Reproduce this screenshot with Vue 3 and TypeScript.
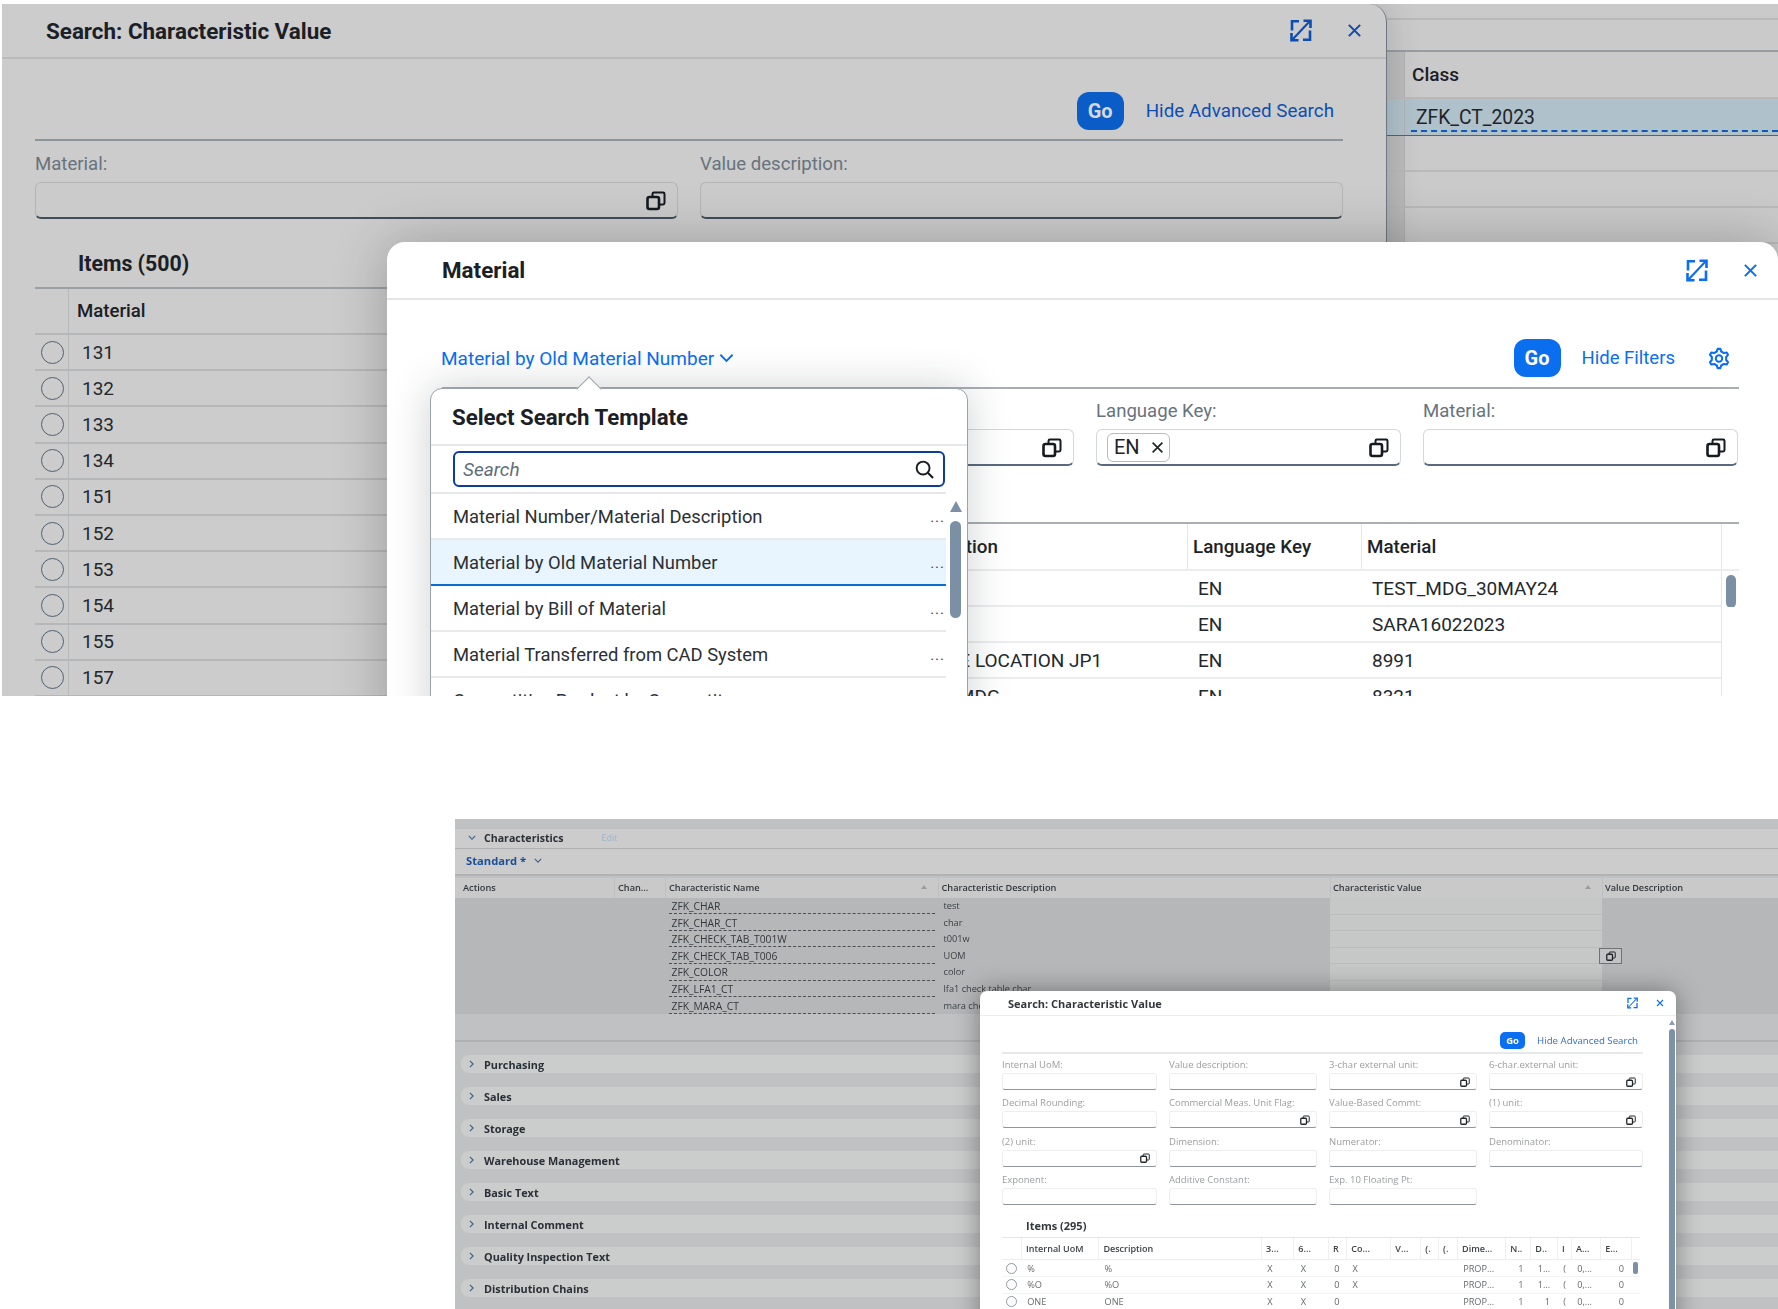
<script setup lang="ts">
const gearPath = (() => {
  const teeth = 6
  const pts: string[] = []
  for (let i = 0; i < teeth; i++) {
    const a = (i / teeth) * Math.PI * 2 - Math.PI / 2
    const step = (Math.PI * 2) / teeth
    const p = (r: number, t: number) =>
      `${(12 + r * Math.cos(t)).toFixed(2)} ${(12 + r * Math.sin(t)).toFixed(2)}`
    pts.push(i === 0 ? `M${p(10.6, a - step * 0.13)}` : `L${p(10.6, a - step * 0.13)}`)
    pts.push(`L${p(10.6, a + step * 0.13)}`)
    pts.push(`L${p(8, a + step * 0.3)}`)
    pts.push(`L${p(8, a + step * 0.7)}`)
  }
  return pts.join(' ') + ' Z'
})()

const materials: string[] = ['131', '132', '133', '134', '151', '152', '153', '154', '155', '157']
const templates: string[] = [
  'Material Number/Material Description',
  'Material by Old Material Number',
  'Material by Bill of Material',
  'Material Transferred from CAD System',
  'Competitive Product by Competitor',
]
interface MatRow { desc: string; lang: string; mat: string }
const matRows: MatRow[] = [
  { desc: '', lang: 'EN', mat: 'TEST_MDG_30MAY24' },
  { desc: '', lang: 'EN', mat: 'SARA16022023' },
  { desc: 'STORAGE LOCATION JP1', lang: 'EN', mat: '8991' },
  { desc: 'TEST12 MDG', lang: 'EN', mat: '8321' },
]
const charRows: { name: string; desc: string }[] = [
  { name: 'ZFK_CHAR', desc: 'test' },
  { name: 'ZFK_CHAR_CT', desc: 'char' },
  { name: 'ZFK_CHECK_TAB_T001W', desc: 't001w' },
  { name: 'ZFK_CHECK_TAB_T006', desc: 'UOM' },
  { name: 'ZFK_COLOR', desc: 'color' },
  { name: 'ZFK_LFA1_CT', desc: 'lfa1 check table char' },
  { name: 'ZFK_MARA_CT', desc: 'mara check table char' },
]
const sections: string[] = [
  'Purchasing', 'Sales', 'Storage', 'Warehouse Management',
  'Basic Text', 'Internal Comment', 'Quality Inspection Text', 'Distribution Chains',
]
interface Field { label: string; help: boolean }
const fields: Field[] = [
  { label: 'Internal UoM:', help: false },
  { label: 'Value description:', help: false },
  { label: '3-char external unit:', help: true },
  { label: '6-char.external unit:', help: true },
  { label: 'Decimal Rounding:', help: false },
  { label: 'Commercial Meas. Unit Flag:', help: true },
  { label: 'Value-Based Commt:', help: true },
  { label: '(1) unit:', help: true },
  { label: '(2) unit:', help: true },
  { label: 'Dimension:', help: false },
  { label: 'Numerator:', help: false },
  { label: 'Denominator:', help: false },
  { label: 'Exponent:', help: false },
  { label: 'Additive Constant:', help: false },
  { label: 'Exp. 10 Floating Pt:', help: false },
]
const uomHead: string[] = ['', 'Internal UoM', 'Description', '3...', '6...', 'R', 'Co...', 'V...', '(.', '(.', 'Dime...', 'N..', 'D..', 'I', 'A...', 'E...', '']
const uomAlign: string[] = ['l', 'l', 'l', 'c', 'c', 'c', 'l', 'l', 'l', 'l', 'l', 'r', 'r', 'l', 'l', 'r', 'l']
const uomRows: string[][] = [
  ['', '%', '%', 'X', 'X', '0', 'X', '', '', '', 'PROP...', '1', '1...', '(', '0,...', '0', ''],
  ['', '%O', '%O', 'X', 'X', '0', 'X', '', '', '', 'PROP...', '1', '1...', '(', '0,...', '0', ''],
  ['', 'ONE', 'ONE', 'X', 'X', '0', '', '', '', '', 'PROP...', '1', '1', '(', '0,...', '0', ''],
]
</script>

<template>
  <div class="page">
    <svg width="0" height="0" class="defs" aria-hidden="true">
      <defs>
        <symbol id="i-expand" viewBox="0 0 22 23">
          <path d="M2 11.5V2.2h7M20 11.5v9.3h-7" fill="none" stroke="currentColor" stroke-width="2.6" />
          <path d="M13.5 1.8h7v7.2M1.5 14v7.2h7" fill="none" stroke="currentColor" stroke-width="2.6" />
          <path d="M19.5 2.5 2.5 20.5" fill="none" stroke="currentColor" stroke-width="2.1" />
        </symbol>
        <symbol id="i-close" viewBox="0 0 16 16">
          <path d="M2 2l12 12M14 2 2 14" fill="none" stroke="currentColor" stroke-width="2.2" />
        </symbol>
        <symbol id="i-help" viewBox="0 0 20 20">
          <rect x="1.5" y="6.5" width="11.5" height="12" rx="2" fill="none" stroke="currentColor" stroke-width="2.6" />
          <path d="M6.5 6V3.4q0-1.4 1.4-1.4h9.2q1.4 0 1.4 1.4v9.2q0 1.4-1.4 1.4h-3.6" fill="none" stroke="currentColor" stroke-width="2" />
        </symbol>
      </defs>
    </svg>

    <section class="top-shot">
      <div class="dlg-back">
        <header class="back-head">
          <span class="title">Search: Characteristic Value</span>
          <span class="head-icons">
            <svg class="ico-expand"><use href="#i-expand" /></svg>
            <svg class="ico-close"><use href="#i-close" /></svg>
          </span>
        </header>
        <div class="back-toolbar">
          <button class="go go-dim">Go</button>
          <span class="link link-dim">Hide Advanced Search</span>
        </div>
        <div class="back-filters">
          <div class="t-field">
            <label class="t-label">Material:</label>
            <div class="t-input t-input-dim"><svg class="ico-help"><use href="#i-help" /></svg></div>
          </div>
          <div class="t-field">
            <label class="t-label">Value description:</label>
            <div class="t-input t-input-dim"></div>
          </div>
        </div>
        <div class="items-title">Items (500)</div>
        <div class="back-table">
          <div class="back-row back-hrow">
            <span class="radio-col"></span>
            <span class="bold-cell">Material</span>
          </div>
          <div v-for="m in materials" :key="m" class="back-row">
            <span class="radio-col"><i class="radio"></i></span>
            <span class="num">{{ m }}</span>
          </div>
        </div>
      </div>

      <div class="bg-table">
        <div class="bg-top1"></div>
        <div class="bg-top2"></div>
        <div class="bg-row bg-hrow"><span class="strip"></span><span class="bold-cell">Class</span></div>
        <div class="bg-row bg-sel"><span class="strip"></span><span class="cls-text"><span>ZFK_CT_2023</span></span></div>
        <div class="bg-row"><span class="strip"></span></div>
        <div class="bg-row"><span class="strip"></span></div>
        <div class="bg-row"><span class="strip"></span></div>
      </div>

      <div class="dlg-mat">
        <header class="mat-head">
          <span class="title">Material</span>
          <span class="head-icons mat-icons">
            <svg class="ico-expand"><use href="#i-expand" /></svg>
            <svg class="ico-close"><use href="#i-close" /></svg>
          </span>
        </header>
        <div class="mat-toolbar">
          <span class="link variant">Material by Old Material Number
            <svg class="chev" viewBox="0 0 16 10"><path d="M1.5 1.5 8 8l6.5-6.5" fill="none" stroke="currentColor" stroke-width="2" /></svg>
          </span>
          <span class="spacer"></span>
          <button class="go">Go</button>
          <span class="link hide-f">Hide Filters</span>
          <svg class="gear" viewBox="0 0 24 24">
            <path :d="gearPath" fill="none" stroke="currentColor" stroke-width="2.3" stroke-linejoin="round" />
            <circle cx="12" cy="12" r="3.5" fill="none" stroke="currentColor" stroke-width="2.2" />
          </svg>
        </div>
        <div class="mat-filters">
          <div class="t-field">
            <label class="t-label">Material Description:</label>
            <div class="t-input"><svg class="ico-help"><use href="#i-help" /></svg></div>
          </div>
          <div class="t-field">
            <label class="t-label">Language Key:</label>
            <div class="t-input">
              <span class="chip">EN <svg class="chip-x" viewBox="0 0 16 16"><path d="M2 2l12 12M14 2 2 14" fill="none" stroke="currentColor" stroke-width="2" /></svg></span>
              <svg class="ico-help"><use href="#i-help" /></svg>
            </div>
          </div>
          <div class="t-field">
            <label class="t-label">Material:</label>
            <div class="t-input"><svg class="ico-help"><use href="#i-help" /></svg></div>
          </div>
        </div>
        <div class="mat-table">
          <div class="mat-row mat-hrow">
            <span></span>
            <span class="mh">Description</span>
            <span class="mh sep">Language Key</span>
            <span class="mh sep">Material</span>
            <span class="sep"></span>
          </div>
          <div v-for="(r, i) in matRows" :key="r.mat" class="mat-row">
            <span></span>
            <span class="mc">{{ r.desc }}</span>
            <span class="mc">{{ r.lang }}</span>
            <span class="mc">{{ r.mat }}</span>
            <span class="mc-last"><i v-if="i === 0" class="mat-thumb"></i></span>
          </div>
        </div>

        <div class="pop">
          <i class="pop-arrow"></i>
          <div class="pop-title">Select Search Template</div>
          <div class="pop-search">
            <div class="search-box">
              <span class="ph">Search</span>
              <svg class="search-ico" viewBox="0 0 20 20">
                <circle cx="8.5" cy="8.5" r="6.8" fill="none" stroke="currentColor" stroke-width="2" />
                <path d="M13.5 13.5 19 19" stroke="currentColor" stroke-width="2.2" />
              </svg>
            </div>
          </div>
          <div class="pop-body">
            <ul class="pop-list">
              <li v-for="(t, i) in templates" :key="t" :class="['pop-item', { 'pop-sel': i === 1 }]">
                <span>{{ t }}</span><span class="dots">...</span>
              </li>
            </ul>
            <div class="pop-scroll">
              <i class="pop-up"></i>
              <i class="pop-thumb"></i>
            </div>
          </div>
        </div>
      </div>
    </section>

    <section class="bottom-shot">
      <div class="ch-bar">
        <svg class="b-chev" viewBox="0 0 10 6"><path d="M1 1l4 4 4-4" fill="none" stroke="currentColor" stroke-width="1.4" /></svg>
        <span class="ch-title">Characteristics</span>
        <span class="ch-edit">Edit</span>
      </div>
      <div class="std-bar"><span class="std">Standard *</span>
        <svg class="b-chev" viewBox="0 0 10 6"><path d="M1 1l4 4 4-4" fill="none" stroke="currentColor" stroke-width="1.4" /></svg>
      </div>
      <div class="ch-table">
        <div class="ch-row ch-hrow">
          <span class="ch-h">Actions</span>
          <span class="ch-h">Chan...</span>
          <span class="ch-h ch-sort">Characteristic Name<i class="sort"></i></span>
          <span class="ch-h">Characteristic Description</span>
          <span class="ch-h ch-sort">Characteristic Value<i class="sort"></i></span>
          <span class="ch-h">Value Description</span>
        </div>
        <div v-for="(r, i) in charRows" :key="r.name" class="ch-row">
          <span class="c-dim"></span>
          <span class="c-dim"></span>
          <span class="c-dim c-name"><span class="dash">{{ r.name }}</span></span>
          <span class="c-dim c-desc">{{ r.desc }}</span>
          <span class="c-val"></span>
          <span class="c-dim">
            <span v-if="i === 3" class="vh-btn"><svg class="vh-ico"><use href="#i-help" /></svg></span>
          </span>
        </div>
      </div>
      <div class="ch-filler"></div>
      <div class="sections">
        <div v-for="s in sections" :key="s" class="sec">
          <svg class="sec-chev" viewBox="0 0 6 10"><path d="M1 1l4 4-4 4" fill="none" stroke="currentColor" stroke-width="1.4" /></svg>
          <span>{{ s }}</span>
        </div>
      </div>

      <div class="dlg-small">
        <header class="s-head">
          <span class="s-title">Search: Characteristic Value</span>
          <span class="s-icons">
            <svg class="s-expand"><use href="#i-expand" /></svg>
            <svg class="s-close"><use href="#i-close" /></svg>
          </span>
        </header>
        <div class="s-toolbar">
          <button class="s-go">Go</button>
          <span class="s-link">Hide Advanced Search</span>
        </div>
        <div class="s-grid">
          <div v-for="f in fields" :key="f.label" class="s-field">
            <label class="s-label">{{ f.label }}</label>
            <div class="s-input"><svg v-if="f.help" class="s-help"><use href="#i-help" /></svg></div>
          </div>
        </div>
        <div class="s-items">Items (295)</div>
        <div class="s-table">
          <div class="s-row s-hrow">
            <span v-for="(h, i) in uomHead" :key="i" class="s-hc">{{ h }}</span>
          </div>
          <div v-for="(r, ri) in uomRows" :key="ri" class="s-row s-brow">
            <span v-for="(c, i) in r" :key="i" :class="['s-c', 's-' + uomAlign[i]]">
              <i v-if="i === 0" class="s-radio"></i>
              <i v-else-if="i === 16 && ri === 0" class="s-thumb"></i>
              <template v-else>{{ c }}</template>
            </span>
          </div>
        </div>
        <div class="s-scroll"><i class="s-up"></i><i class="s-sthumb"></i></div>
      </div>
    </section>
  </div>
</template>

<style>
html, body { margin: 0; background: #fff; }
</style>

<style scoped>
.page { width: 1778px; height: 1309px; overflow: hidden; background: #fff; font-family: Roboto, "Liberation Sans", sans-serif; }
.defs { position: absolute; }
button { border: 0; padding: 0; font-family: inherit; }
i { display: block; }

/* ---- top screenshot ---- */
.top-shot { position: relative; display: flex; margin: 4px 0 0 2px; width: 1776px; height: 692px; overflow: hidden; background: #cacaca; color: #1e2327; font-size: 19px; }
.title { font-size: 22.4px; font-weight: 700; color: #1b2026; }
.dlg-back { position: relative; z-index: 1; flex: none; width: 1385px; height: 700px; background: #cccccc; border-radius: 0 18px 0 0; border-right: 1px solid #6d7680; box-sizing: border-box; box-shadow: 0 0 34px rgba(0, 0, 0, .16); }
.back-head { height: 55px; box-sizing: border-box; padding: 0 24px 0 44px; display: flex; align-items: center; justify-content: space-between; border-bottom: 2px solid #b8babb; }
.head-icons { display: flex; align-items: center; gap: 35px; color: #0c4db0; }
.ico-expand { width: 22px; height: 23px; display: block; }
.ico-close { width: 15px; height: 15px; display: block; }
.back-toolbar { height: 82px; margin: 0 43px 0 33px; box-sizing: border-box; border-bottom: 2px solid #8d959c; padding: 24px 9px 0 0; display: flex; align-items: center; justify-content: flex-end; gap: 22px; }
.go { width: 47px; height: 38px; border-radius: 12px; background: #0a6fef; color: #fff; font-size: 20px; font-weight: 700; }
.go-dim { background: #0a5cc6; color: #d6d9dc; }
.link { font-size: 19px; color: #0a6ef0; }
.link-dim { color: #0c4fb0; font-size: 18.8px; }
.back-filters { display: grid; grid-template-columns: 643px 643px; column-gap: 22px; margin-left: 33px; }
.t-field { display: flex; flex-direction: column; min-width: 0; }
.t-label { height: 41px; line-height: 47px; font-size: 18.6px; color: #68737d; white-space: nowrap; }
.t-input { position: relative; height: 37px; box-sizing: border-box; display: flex; align-items: center; justify-content: flex-end; padding: 0 11px 0 10px; border: 1px solid #d3d8dc; border-bottom: 2px solid #586b7e; border-radius: 6px; background: #fff; }
.t-input-dim { background: #cbcbcb; border-color: #b3b5b7; border-bottom-color: #3f4d5b; }
.ico-help { width: 20px; height: 21px; color: #151a20; display: block; }
.items-title { height: 68px; box-sizing: border-box; padding: 32px 0 0 76px; font-size: 21.3px; font-weight: 700; line-height: 26px; color: #1b2026; }
.back-table { margin-left: 33px; border-top: 2px solid #9aa0a6; }
.back-row { display: flex; height: 36.2px; box-sizing: border-box; border-bottom: 2px solid #b6b7b8; align-items: center; }
.back-hrow { height: 46px; }
.radio-col { width: 34px; height: 100%; flex: none; box-sizing: border-box; padding-left: 1px; border-right: 1px solid #b5b8ba; display: flex; align-items: center; justify-content: center; }
.radio { width: 23px; height: 23px; box-sizing: border-box; border: 1.5px solid #4f6072; border-radius: 50%; }
.bold-cell { padding-left: 8px; font-size: 18.6px; font-weight: 500; color: #1b2026; }
.num { padding-left: 13px; color: #23282d; }

.bg-table { flex: 1; min-width: 0; }
.bg-top1 { height: 16px; box-sizing: border-box; border-bottom: 2px solid #b9b9b9; }
.bg-top2 { height: 32px; box-sizing: border-box; border-bottom: 2px solid #979ca1; }
.bg-row { display: flex; height: 36px; box-sizing: border-box; border-bottom: 2px solid #b9b9b9; align-items: stretch; }
.bg-hrow { height: 47px; align-items: stretch; }
.bg-hrow .bold-cell { align-self: center; padding-left: 7px; font-size: 19px; }
.strip { width: 18px; flex: none; box-sizing: border-box; border-right: 1px solid #b0b3b5; background: rgba(0, 0, 0, .07); }
.bg-sel { height: 37px; background: #afc1ca; border-bottom: 1px solid #1f6fc4; }
.bg-sel .strip { background: none; }
.cls-text { flex: 1; margin: 0 0 3px 6px; padding: 5px 0 0 5px; height: 26px; line-height: 28px; border-bottom: 2px dashed #1259b5; font-size: 19.3px; color: #1f2429; }

.dlg-mat { position: absolute; z-index: 2; left: 385px; top: 238px; right: 0; height: 500px; background: #fff; border-radius: 18px 18px 0 0; box-shadow: 0 0 55px rgba(0, 0, 0, .24); }
.mat-head { height: 58px; box-sizing: border-box; padding: 0 20px 0 55px; display: flex; align-items: center; justify-content: space-between; border-bottom: 2px solid #e4e5e6; }
.mat-icons { color: #0a6ef0; }
.mat-toolbar { height: 89px; margin: 0 39px 0 55px; box-sizing: border-box; border-bottom: 2px solid #a8aeb4; padding-top: 29px; display: flex; align-items: center; }
.variant { display: flex; align-items: center; gap: 5px; font-size: 19px; margin-left: -1px; }
.chev { width: 15px; height: 10px; }
.spacer { flex: 1; }
.hide-f { margin-left: 21px; font-size: 18.5px; }
.gear { width: 22px; height: 23px; margin-left: 33px; margin-right: 9px; color: #0a6ef0; }
.mat-filters { display: grid; grid-template-columns: 632px 305px 315px; column-gap: 22px; margin: -1px 39px 0 55px; }
.chip { display: flex; align-items: center; gap: 11px; height: 29px; box-sizing: border-box; padding: 0 5px 0 6px; border: 1px solid #b4bcc3; border-radius: 6px; font-size: 20px; color: #1e2327; margin-right: auto; }
.chip-x { width: 13px; height: 13px; }
.mat-table { margin: 56px 39px 0 55px; border-top: 2px solid #a8aeb4; }
.mat-row { display: grid; grid-template-columns: 455px 290px 174px 360px 18px; height: 36px; box-sizing: border-box; border-bottom: 2px solid #ecedee; align-items: center; }
.mat-hrow { height: 47px; }
.mat-hrow > span { height: 100%; display: flex; align-items: center; box-sizing: border-box; }
.mh { font-weight: 500; font-size: 18.8px; padding-left: 5px; white-space: nowrap; }
.mh.sep, .mat-hrow .sep { border-left: 1px solid #e4e6e8; }
.mc { padding-left: 11px; white-space: nowrap; color: #23282d; }
.mat-row .mc:nth-child(2) { padding-left: 0; margin-left: -10px; }
.mc-last { align-self: stretch; position: relative; background: #fff; margin-bottom: -2px; border-left: 1px solid #e4e6e8; }
.mat-thumb { width: 10px; height: 33px; margin: 4px 0 0 4px; border-radius: 5px; background: #7b90a5; }

.pop { position: absolute; left: 43px; top: 146px; width: 538px; height: 420px; box-sizing: border-box; background: #fff; border: 1px solid #9aa3ab; border-radius: 12px 12px 0 0; box-shadow: 0 0 42px rgba(30, 40, 50, .22); }
.pop-arrow { position: absolute; left: 149px; top: -9px; width: 17px; height: 17px; background: #fff; border-left: 1px solid #9aa3ab; border-top: 1px solid #9aa3ab; transform: rotate(45deg); }
.pop-title { position: relative; height: 57px; box-sizing: border-box; padding: 0 0 0 21px; line-height: 56px; font-size: 22.2px; font-weight: 700; border-bottom: 2px solid #e6e7e8; color: #1b2026; }
.pop-search { width: 515px; height: 48px; box-sizing: border-box; padding: 5px 1px 0 22px; border-bottom: 2px solid #e6e7e8; }
.search-box { height: 36px; box-sizing: border-box; border: 2.5px solid #0b3d9e; border-radius: 6px; display: flex; align-items: center; justify-content: space-between; padding: 0 9px 0 8px; }
.ph { font-style: italic; font-size: 19px; color: #5f6d7b; }
.search-ico { width: 19px; height: 19px; color: #171c21; }
.pop-body { display: flex; }
.pop-list { width: 515px; margin: 0; padding: 0; list-style: none; flex: none; }
.pop-item { height: 46px; box-sizing: border-box; padding: 0 1px 0 22px; display: flex; align-items: center; justify-content: space-between; border-bottom: 2px solid #e8e9ea; font-size: 18.4px; color: #2b3035; white-space: nowrap; }
.pop-sel { background: #e9f5fe; border-bottom: 2px solid #0a6ed1; }
.dots { font-size: 15px; letter-spacing: 1px; padding-top: 2px; color: #3a4046; }
.pop-scroll { margin-left: 4px; width: 11px; padding-top: 7px; display: flex; flex-direction: column; align-items: center; gap: 9px; }
.pop-up { width: 0; height: 0; border-left: 6px solid transparent; border-right: 6px solid transparent; border-bottom: 11px solid #7b90a5; }
.pop-thumb { width: 11px; height: 97px; border-radius: 6px; background: #7b90a5; }

/* ---- bottom screenshot ---- */
.bottom-shot { position: relative; margin: 123px 0 0 455px; width: 1323px; height: 490px; overflow: hidden; background: #c0c1c3; font-family: "Open Sans", Roboto, sans-serif; filter: blur(.45px); display: flow-root; }
.ch-bar { margin-top: 10px; height: 20px; box-sizing: border-box; padding: 0 0 2px 13px; display: flex; align-items: center; background: #cccccc; border-bottom: 1px solid #afb1b3; color: #3a5d80; }
.b-chev { width: 8px; height: 5px; color: #3f6188; flex: none; }
.ch-title { margin-left: 8px; font-size: 10.6px; font-weight: 700; color: #2a3037; }
.ch-edit { margin-left: 38px; font-size: 9px; color: #9db4cc; }
.std-bar { height: 27px; box-sizing: border-box; padding: 0 0 2px 11px; display: flex; align-items: center; gap: 8px; background: #cccccc; border-bottom: 2px solid #b0b2b4; }
.std { font-size: 11.2px; font-weight: 700; color: #1c4f96; }
.ch-table { margin-top: 2px; }
.ch-row { display: grid; grid-template-columns: 159px 51px 272.5px 392.5px 272px 176px; height: 16.6px; }
.ch-hrow { height: 20px; background: #c9c9c9; align-items: center; }
.ch-h { padding: 0 0 2px 8px; font-size: 9.2px; font-weight: 600; color: #33383e; white-space: nowrap; display: flex; align-items: center; height: 100%; box-sizing: border-box; }
.ch-h:nth-child(n+2) { border-left: 1px solid #bdbfc1; padding-left: 3px; }
.ch-h:nth-child(n+5) { padding-left: 2px; }
.ch-sort { justify-content: space-between; padding-right: 11px; }
.ch-h.ch-sort { padding-right: 11px; }
.sort { width: 0; height: 0; border-left: 3.5px solid transparent; border-right: 3.5px solid transparent; border-bottom: 4px solid #9a9d9f; }
.c-dim { background: #b6b7b8; min-width: 0; }
.c-val { background: #c6c7c7; box-sizing: border-box; border-bottom: 1px solid #bbbcbd; }
.c-name { padding: 0 2.5px 0 3.5px; }
.dash { display: block; height: 16.2px; box-sizing: border-box; padding-left: 3px; line-height: 16.5px; font-size: 10.3px; color: #33383d; border-bottom: 1px dashed #4b4f54; white-space: nowrap; }
.c-desc { padding-left: 6px; line-height: 16.5px; font-size: 9.2px; color: #3b4045; white-space: nowrap; }
.vh-btn { display: flex; width: 23px; height: 16.5px; margin-left: -3px; box-sizing: border-box; border: 1px solid #6f7275; align-items: center; justify-content: center; background: #c2c3c4; }
.vh-ico { width: 10px; height: 10px; color: #1f2327; display: block; }
.ch-filler { height: 28px; box-sizing: border-box; background: #c0c1c3; border-bottom: 2px solid #afb1b3; }
.sections { display: flex; flex-direction: column; gap: 14px; padding: 13px 0 0 6px; }
.sec { height: 18px; display: flex; align-items: center; padding-left: 8px; border-radius: 8px 0 0 8px; background: #cbcccc; font-size: 10.85px; font-weight: 700; color: #2a3037; }
.sec-chev { width: 5px; height: 8px; margin-right: 10px; color: #3a5f86; flex: none; }

.dlg-small { position: absolute; left: 525px; top: 172px; width: 696px; height: 360px; background: #fff; border-radius: 7px 7px 0 0; box-shadow: 0 0 26px rgba(0, 0, 0, .38); }
.s-head { height: 25px; box-sizing: border-box; padding: 0 12px 0 28px; display: flex; align-items: center; justify-content: space-between; border-bottom: 1px solid #eceded; }
.s-title { font-size: 11px; font-weight: 700; color: #33383d; }
.s-icons { display: flex; align-items: center; gap: 18px; color: #0a6ef0; }
.s-expand { width: 11px; height: 12px; display: block; }
.s-close { width: 8px; height: 8px; display: block; }
.s-toolbar { height: 38px; margin: 0 33px 0 22px; box-sizing: border-box; border-bottom: 2px solid #e6e8ea; padding: 12px 5px 0 0; display: flex; align-items: center; justify-content: flex-end; gap: 12px; }
.s-go { width: 25px; height: 17px; border-radius: 5px; background: #0a6ff0; color: #fff; font-size: 9.5px; font-weight: 700; }
.s-link { font-size: 9.7px; color: #2f71c8; }
.s-grid { margin-left: 22px; display: grid; grid-template-columns: 155px 148px 148px 154px; column-gap: 12px; row-gap: 2.3px; }
.s-field { min-width: 0; }
.s-label { display: block; height: 19px; line-height: 21px; font-size: 9.5px; color: #9a9da0; white-space: nowrap; }
.s-input { height: 17px; box-sizing: border-box; display: flex; align-items: center; justify-content: flex-end; padding-right: 6px; border: 1px solid #eeeeef; border-bottom: 1.5px solid #8e959c; border-radius: 3px; }
.s-help { width: 10px; height: 10px; color: #23272c; display: block; }
.s-items { height: 31px; box-sizing: border-box; margin-left: 46px; padding-top: 14px; font-size: 11px; font-weight: 700; color: #33383d; line-height: 13px; }
.s-table { margin: 1px 36px 0 22px; border-top: 1px solid #e4e6e8; }
.s-row { display: grid; grid-template-columns: 18.7px 77.3px 162.7px 32.3px 34.7px 18.3px 44px 30px 17.7px 19px 48.3px 25px 26.7px 14px 29.3px 30.7px 9.3px; align-items: center; box-sizing: border-box; }
.s-hrow { height: 22.3px; border-bottom: 1px solid #eceded; }
.s-hc { display: flex; align-items: center; height: 100%; box-sizing: border-box; padding-left: 4.4px; border-left: 1px solid #f0f0f1; font-size: 9px; font-weight: 600; color: #3e4348; white-space: nowrap; overflow: hidden; }
.s-hc:first-child { border-left: 0; }
.s-brow { height: 16.7px; border-bottom: 1px solid #f3f3f4; }
.s-c { padding-left: 6.5px; font-size: 9.2px; color: #666a6e; white-space: nowrap; overflow: hidden; line-height: 15px; }
.s-r { text-align: right; padding: 0 6.5px 0 0; }
.s-c.s-c { min-width: 0; }
.s-brow .s-c:nth-child(1) { padding-left: 4px; overflow: visible; }
.s-radio { width: 11px; height: 11px; box-sizing: border-box; border: 1px solid #8f9aa5; border-radius: 50%; }
.s-brow .s-c:nth-child(17) { padding: 0 0 0 2px; overflow: visible; }
.s-thumb { width: 5px; height: 12px; border-radius: 2px; background: #7b90a5; }
.s-scroll { position: absolute; left: 689px; top: 29px; width: 6px; display: flex; flex-direction: column; align-items: center; gap: 4px; }
.s-up { width: 0; height: 0; border-left: 3px solid transparent; border-right: 3px solid transparent; border-bottom: 5px solid #8d9dad; }
.s-sthumb { width: 6px; height: 330px; border-radius: 3px; background: #7b92a8; }
.c-val + .c-dim { overflow: visible; }
.s-c:nth-child(4), .s-c:nth-child(5) { text-align: center; padding: 0 14px 0 0; }
.s-c:nth-child(6) { text-align: center; padding: 0; }
</style>
